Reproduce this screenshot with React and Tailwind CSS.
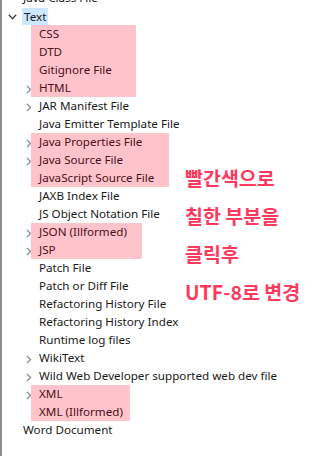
const groups = [
  { kind: "row", label: "Java Class File", level: 0 },
  { kind: "root", label: "Text" },
  {
    kind: "group",
    width: "w-[105px]",
    rows: [
      { label: "CSS" },
      { label: "DTD" },
      { label: "Gitignore File" },
      { label: "HTML", chevron: true },
    ],
  },
  { kind: "row", label: "JAR Manifest File", level: 1, chevron: true },
  { kind: "row", label: "Java Emitter Template File", level: 1 },
  {
    kind: "group",
    width: "w-[138px]",
    rows: [
      { label: "Java Properties File", chevron: true },
      { label: "Java Source File", chevron: true },
      { label: "JavaScript Source File" },
    ],
  },
  { kind: "row", label: "JAXB Index File", level: 1 },
  { kind: "row", label: "JS Object Notation File", level: 1 },
  {
    kind: "group",
    width: "w-[111px]",
    rows: [
      { label: "JSON (Illformed)", chevron: true },
      { label: "JSP", chevron: true },
    ],
  },
  { kind: "row", label: "Patch File", level: 1 },
  { kind: "row", label: "Patch or Diff File", level: 1 },
  { kind: "row", label: "Refactoring History File", level: 1 },
  { kind: "row", label: "Refactoring History Index", level: 1 },
  { kind: "row", label: "Runtime log files", level: 1 },
  { kind: "row", label: "WikiText", level: 1, chevron: true },
  { kind: "row", label: "Wild Web Developer supported web dev file", level: 1, chevron: true },
  {
    kind: "group",
    width: "w-[99px]",
    rows: [
      { label: "XML", chevron: true },
      { label: "XML (Illformed)" },
    ],
  },
  { kind: "row", label: "Word Document", level: 0 },
];

function ChevronRight() {
  return (
    <svg width="6" height="9" viewBox="0 0 6 9" className="shrink-0">
      <path d="M1 1 L4.5 4.5 L1 8" fill="none" stroke="#8c8c8c" strokeWidth="1.3" />
    </svg>
  );
}

function ChevronDown() {
  return (
    <svg width="9" height="6" viewBox="0 0 9 6">
      <path d="M0.8 0.8 L4.5 4.7 L8.2 0.8" fill="none" stroke="#404040" strokeWidth="1.3" />
    </svg>
  );
}

function Row({ label, level, chevron }) {
  return (
    <div className="flex h-[18px] items-center">
      <div className={`${level ? "w-[37px]" : "w-[21px]"} flex shrink-0 justify-start`}>
        {chevron && <span className="ml-[24px] mt-[2px] flex"><ChevronRight /></span>}
      </div>
      <span className="whitespace-nowrap text-[#1a1a1a]">{label}</span>
    </div>
  );
}

export default function App() {
  return (
    <div
      className="relative h-[456px] w-[318px] overflow-hidden bg-white text-[11.65px] leading-[18px]"
      style={{ fontFamily: '"Noto Sans", "Noto Sans CJK KR", sans-serif' }}
    >
      <div className="flex h-full">
        <div className="w-[2px] shrink-0 bg-[#8f8f8f]" />
        <div className="-mt-[11px] flex flex-col">
          {groups.map((g, i) => {
            if (g.kind === "root") {
              return (
                <div key={i} className="flex h-[18px] items-center">
                  <div className="flex w-[20px] shrink-0 justify-start pl-[6px] pt-[1px]">
                    <ChevronDown />
                  </div>
                  <span className="h-[17px] bg-[#cce8ff] px-[2px] leading-[17px] text-[#1a1a1a]">Text</span>
                </div>
              );
            }
            if (g.kind === "group") {
              return (
                <div key={i} className="flex flex-col">
                  {g.rows.map((r) => (
                    <div key={r.label} className="flex h-[18px] items-center">
                      <div className="flex w-[29px] shrink-0 items-center">
                        {r.chevron && <span className="ml-[24px] mt-[2px] flex"><ChevronRight /></span>}
                      </div>
                      <div className={`${g.width} flex h-[18px] items-center bg-[#ffc4cb] pl-[8px]`}>
                        <span className="whitespace-nowrap text-[#4a1018]">{r.label}</span>
                      </div>
                    </div>
                  ))}
                </div>
              );
            }
            return <Row key={i} {...g} level={g.level} />;
          })}
        </div>
      </div>

      <div
        className="absolute left-[185px] top-[163px] flex flex-col gap-[8px] text-[19.5px] font-bold leading-[30px] text-[#fb3a5e]"
        style={{ fontFamily: '"Noto Sans CJK KR", sans-serif' }}
      >
        <span>빨간색으로</span>
        <span>칠한 부분을</span>
        <span>클릭후</span>
        <span>UTF-8로 변경</span>
      </div>
    </div>
  );
}
